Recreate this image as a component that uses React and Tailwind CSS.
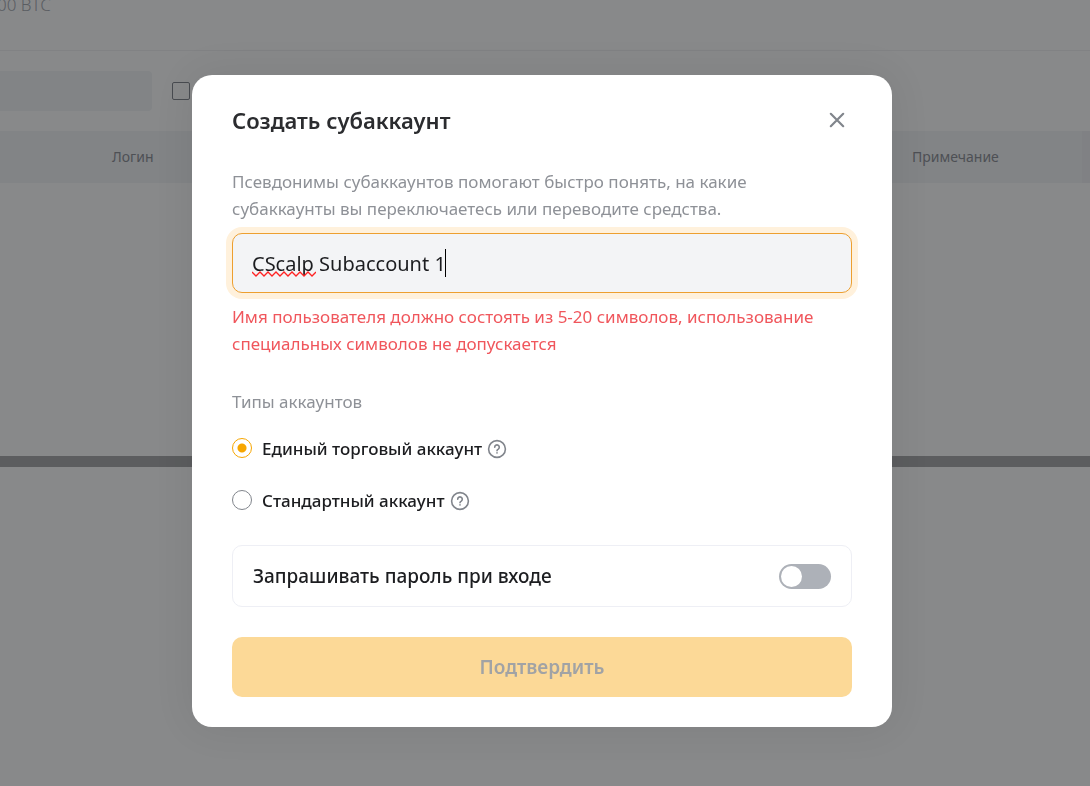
import { useState } from 'react';

const ACCOUNT_TYPES = [
  { id: 'unified', label: 'Единый торговый аккаунт' },
  { id: 'standard', label: 'Стандартный аккаунт' },
];

function HelpIcon() {
  return (
    <svg className="w-5 h-5" viewBox="0 0 20 20" fill="none" stroke="currentColor" strokeWidth={1.6} strokeLinecap="round" strokeLinejoin="round">
      <circle cx="10" cy="10" r="8.4" />
      <path d="M7.7 8.2a2.3 2.3 0 1 1 3.6 1.9c-.8.5-1.3.9-1.3 1.6" />
      <path d="M10 13.9v.1" />
    </svg>
  );
}

// Account list behind the dialog
function AccountsPage() {
  return (
    <div className="min-h-screen bg-white text-[#8a8d94]">
      <div className="h-[51px] border-b border-[#f0f1f3] overflow-hidden">
        <p className="text-[17px] leading-[24px] -mt-[7px] -ml-[3px] font-light text-[#a3a7af]">00 BTC</p>
      </div>
      <div className="h-20 flex items-center">
        <div className="w-[152px] h-10 bg-[#f3f4f7] rounded-r" />
        <input type="checkbox" aria-label="Фильтр" className="appearance-none ml-5 w-[18px] h-[18px] border border-[#81858c] rounded-xs" />
      </div>
      <table className="w-full table-fixed text-left">
        <thead className="bg-[#f3f4f7]">
          <tr className="h-[52px] text-[14px]">
            <th className="w-[912px] pl-28 pb-0.5 font-normal">Логин</th>
            <th className="pb-0.5 font-normal border-r-8 border-[#eeeff2]">Примечание</th>
          </tr>
        </thead>
      </table>
      <div className="h-[273px]" />
      <div className="h-[11px] bg-[#a6a7a8]" />
    </div>
  );
}

function CreateSubaccountDialog() {
  const [name, setName] = useState('CScalp Subaccount 1');
  const [type, setType] = useState('unified');
  const [askPassword, setAskPassword] = useState(false);

  return (
    <div role="dialog" aria-modal="true" aria-labelledby="dialog-title" className="w-full max-w-[700px] bg-white rounded-[20px] px-10 pt-[27px] pb-[30px] shadow-[0_0_40px_rgba(0,0,0,0.08)]">
      <div className="flex items-center justify-between pr-1">
        <h2 id="dialog-title" className="text-[22px] leading-9 font-semibold text-[#2b2c2f]">Создать субаккаунт</h2>
        <button type="button" aria-label="Закрыть" className="text-[#81858c]">
          <svg className="w-[22px] h-[22px]" viewBox="0 0 22 22" fill="none" stroke="currentColor" strokeWidth={2.2} strokeLinecap="round">
            <path d="M4.8 4.8l12.4 12.4M17.2 4.8l-12.4 12.4" />
          </svg>
        </button>
      </div>

      <label htmlFor="alias" className="block mt-[30px] text-[17px] leading-[27px] text-[#8e9197]">
        Псевдонимы субаккаунтов помогают быстро понять, на какие<br />
        субаккаунты вы переключаетесь или переводите средства.
      </label>
      <div className="relative mt-[11px]">
        <input
          id="alias"
          type="text"
          value={name}
          onChange={(e) => setName(e.target.value)}
          spellCheck={false}
          className="block w-full h-[60px] px-[19px] bg-[#f3f4f6] border border-[#ed9f2f] rounded-[10px] outline-none ring-6 ring-[#fff1dc] text-[20px] text-[#1c1d20]"
        />
        {/* Spelling mark under the first word */}
        <svg className="absolute left-5 top-[38px] w-16 h-[6px] pointer-events-none" viewBox="0 0 64 6" fill="none" stroke="#f22" strokeWidth={1.3}>
          <path d="M0 1l4 4 4-4 4 4 4-4 4 4 4-4 4 4 4-4 4 4 4-4 4 4 4-4 4 4 4-4 4 4 4-4" />
        </svg>
        <span className="absolute left-[213px] top-4 w-px h-7 bg-black" />
      </div>
      <p className="mt-[10px] text-[17px] leading-[27px] text-[#f0565c]">
        Имя пользователя должно состоять из 5-20 символов, использование<br />
        специальных символов не допускается
      </p>

      <fieldset className="mt-[31px]">
        <legend className="text-[17px] leading-[27px] text-[#8e9197]">Типы аккаунтов</legend>
        <div className="mt-5 space-y-[25px]">
          {ACCOUNT_TYPES.map((t) => (
            <div key={t.id} className="flex items-center h-[27px]">
              <input
                id={t.id}
                type="radio"
                name="account-type"
                checked={type === t.id}
                onChange={() => setType(t.id)}
                className="appearance-none w-5 h-5 mb-0.5 rounded-full border border-[#81858c] bg-white checked:border-[#f7a600] checked:bg-[radial-gradient(circle,#f7a600_4px,#fff_5px)]"
              />
              <label htmlFor={t.id} className="ml-[10px] text-[17px] font-medium text-[#1c1d20]">{t.label}</label>
              <button type="button" aria-label="Подробнее" className="ml-[5px] text-[#81858c]"><HelpIcon /></button>
            </div>
          ))}
        </div>
      </fieldset>

      <div className="mt-[31px] h-[62px] px-5 flex items-center justify-between border border-[#eeeff5] rounded-[10px]">
        <label htmlFor="ask-password" className="text-[19px] font-medium text-[#1c1d20]">Запрашивать пароль при входе</label>
        <input
          id="ask-password"
          type="checkbox"
          role="switch"
          checked={askPassword}
          onChange={(e) => setAskPassword(e.target.checked)}
          className="appearance-none w-[52px] h-[25px] p-0.5 flex items-center rounded-full bg-[#adb1b8] checked:bg-[#f7a600] checked:justify-end before:block before:w-[21px] before:h-[21px] before:rounded-full before:bg-white"
        />
      </div>

      <button type="submit" disabled className="mt-[30px] w-full h-[60px] rounded-[10px] bg-[#fcd997] text-[19px] font-semibold text-[#a1a3a5]">Подтвердить</button>
    </div>
  );
}

export default function App() {
  return (
    <div className="font-['Noto_Sans','Open_Sans',sans-serif]">
      <AccountsPage />
      <div className="fixed inset-0 flex items-center justify-center pt-4 pr-1.5 bg-[#121416]/50">
        <CreateSubaccountDialog />
      </div>
    </div>
  );
}
